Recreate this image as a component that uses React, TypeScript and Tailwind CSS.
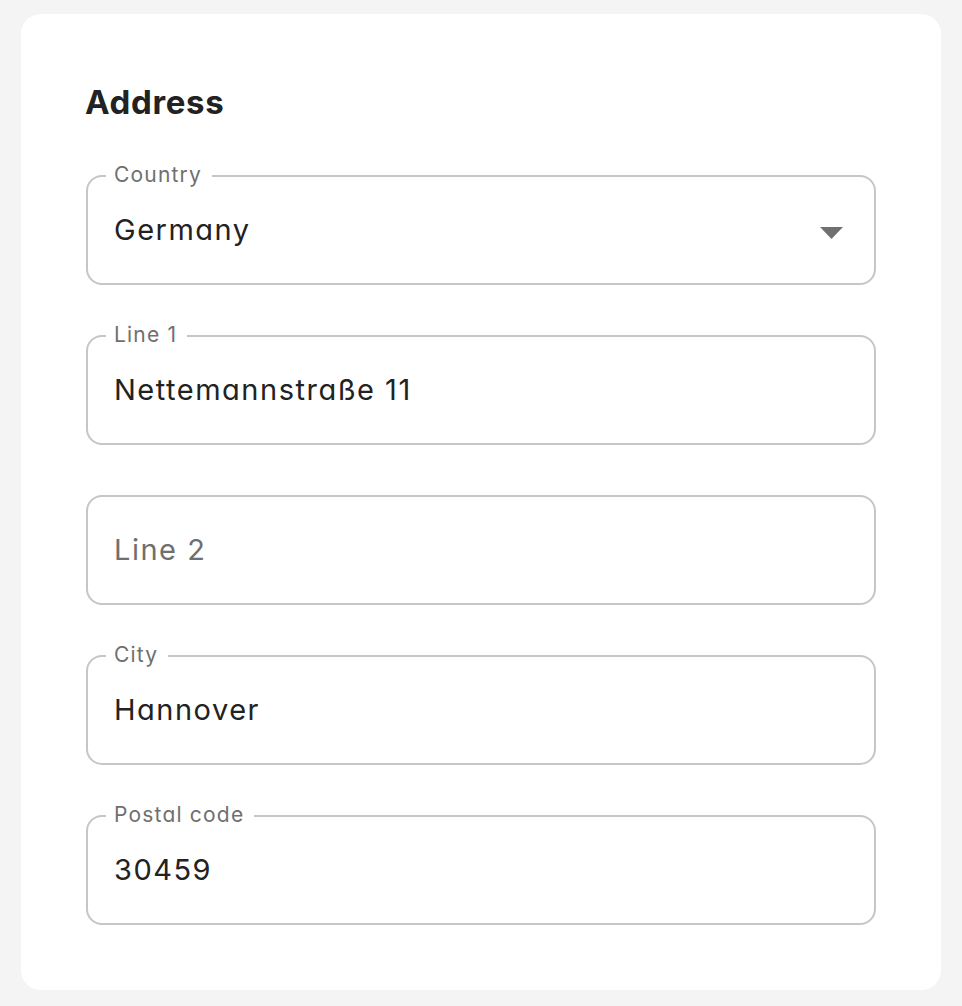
import React from 'react';

interface FieldProps {
  label?: string;
  value?: string;
  placeholder?: string;
  select?: boolean;
}

function Field({ label, value, placeholder, select }: FieldProps) {
  return (
    <div className="relative h-[110px] rounded-[16px] border-2 border-[#c6c6c6] flex items-center pl-[26px] pr-[31px]">
      {label && (
        <span className="absolute -top-[14px] left-[18px] pl-[8px] pr-[10px] bg-white text-[21px] leading-[24px] text-[#6f6f6f] tracking-[0.057em]">
          {label}
        </span>
      )}
      <span
        className={`flex-1 text-[29px] leading-[36px] tracking-[0.052em] ${
          value ? 'text-[#222222]' : 'text-[#6f6f6f]'
        }`}
      >
        {value || placeholder}
      </span>
      {select && (
        <svg width="23" height="12" viewBox="0 0 23 12" className="mt-[6px]">
          <polygon points="0,0 23,0 11.5,12" fill="#707070" />
        </svg>
      )}
    </div>
  );
}

export default function App() {
  return (
    <div className="min-h-screen bg-[#f4f4f4] pt-[14px] pl-[21px] pr-[21px] font-['Inter',_sans-serif] [font-feature-settings:'cv11']">
      <div className="w-[920px] h-[976px] bg-white rounded-[20px] px-[65px] pt-[68px] pb-[65px]">
        <h2 className="-ml-[1px] text-[33px] leading-[40px] font-bold text-[#222222] tracking-[0.02em]">Address</h2>

        <div className="mt-[53px] flex flex-col gap-[50px]">
          <Field label="Country" value="Germany" select />
          <Field label="Line 1" value="Nettemannstraße 11" />
          <Field placeholder="Line 2" />
          <Field label="City" value="Hannover" />
          <Field label="Postal code" value="30459" />
        </div>
      </div>
    </div>
  );
}
